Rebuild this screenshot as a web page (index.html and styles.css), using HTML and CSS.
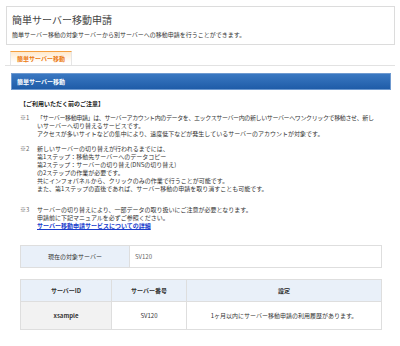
FILE: index.html
```html
<!DOCTYPE html>
<html lang="ja">
<head>
    <meta charset="UTF-8">
    <title>簡単サーバー移動申請</title>
    <link rel="stylesheet" href="styles.css">
</head>
<body>
    <div class="page-head">
        <h1>簡単サーバー移動申請</h1>
        <p class="lead">簡単サーバー移動の対象サーバーから別サーバーへの移動申請を行うことができます。</p>
    </div>

    <div class="tabs">
        <span class="tab">簡単サーバー移動</span>
    </div>

    <div class="section-bar">簡単サーバー移動</div>

    <div class="notes">
        <h2 class="notes-title">【ご利用いただく前のご注意】</h2>

        <div class="note">
            <span class="note-mark">※1</span>
            <p><span class="tight">「サーバー移動申請」は、サーバーアカウント内のデータを、エックスサーバー内の新しいサーバーへワンクリックで移動させ、新し</span><br>
            いサーバーへ切り替えるサービスです。<br>
            アクセスが多いサイトなどの集中により、速度低下などが発生しているサーバーのアカウントが対象です。</p>
        </div>

        <div class="note note-long">
            <span class="note-mark">※2</span>
            <p>新しいサーバーの切り替えが行われるまでには、<br>
            第1ステップ：移動先サーバーへのデータコピー<br>
            第2ステップ：サーバーの切り替え(DNSの切り替え)<br>
            の2ステップの作業が必要です。<br>
            共にインフォパネルから、クリックのみの作業で行うことが可能です。<br>
            また、第1ステップの直後であれば、サーバー移動の申請を取り消すことも可能です。</p>
        </div>

        <div class="note">
            <span class="note-mark">※3</span>
            <p>サーバーの切り替えにより、一部データの取り扱いにご注意が必要となります。<br>
            申請前に下記マニュアルを必ずご参照ください。<br>
            <a href="#" class="more-link">サーバー移動申請サービスについての詳細</a></p>
        </div>
    </div>

    <table class="info-table current">
        <tr>
            <th>現在の対象サーバー</th>
            <td>SV120</td>
        </tr>
    </table>

    <table class="info-table servers">
        <tr>
            <th class="col-id">サーバーID</th>
            <th class="col-no">サーバー番号</th>
            <th>設定</th>
        </tr>
        <tr>
            <td class="server-id">xsample</td>
            <td>SV120</td>
            <td>1ヶ月以内にサーバー移動申請の利用履歴があります。</td>
        </tr>
    </table>
</body>
</html>
```

FILE: styles.css
```css
body {
    margin: 0;
    font-family: "Noto Sans CJK JP", "Noto Sans", sans-serif;
    font-size: 6px;
    color: #333;
    background: #fff;
}

.page-head {
    margin: 6px 5px 0 6px;
    height: 37px;
    border: 1px solid #dcdcdc;
    padding: 0 5px;
    box-sizing: content-box;
}

.page-head h1 {
    margin: 6px 0 0;
    font-size: 10px;
    font-weight: normal;
    line-height: 14px;
    color: #444;
}

.lead {
    margin: 4px 0 0;
    line-height: 8px;
}

.tabs {
    margin: 6px 5px 0 5px;
    padding-left: 5px;
    border-bottom: 1px solid #e2e2e2;
    height: 14px;
}

.tab {
    display: inline-block;
    height: 13px;
    padding: 0 6px;
    border: 1px solid #e6e6e6;
    border-top: 1px solid #f5a040;
    border-bottom: none;
    background: linear-gradient(#ffe9cc, #fff 80%);
    color: #ec7a12;
    font-weight: bold;
    line-height: 13px;
}

.section-bar {
    margin: 7px 9px 0 11px;
    height: 15px;
    padding-left: 5px;
    border: 1px solid #6f9ad0;
    background: linear-gradient(#3a78c2, #1f5ca8);
    color: #fff;
    font-weight: bold;
    line-height: 15px;
}

.notes {
    padding: 0 14px 0 20px;
}

.notes-title {
    margin: 10px 0 6px;
    font-size: 6px;
    font-weight: bold;
    line-height: 8px;
    color: #222;
}

.note {
    display: grid;
    grid-template-columns: 17px 1fr;
    margin-bottom: 7px;
}

.note-long {
    margin-bottom: 13px;
}

.note-mark {
    color: #666;
    line-height: 8px;
}

.note p {
    margin: 0;
    line-height: 8px;
    white-space: nowrap;
}

.tight {
    letter-spacing: -0.38px;
}

.more-link {
    color: #1a3ccc;
    font-weight: bold;
    text-decoration: underline;
}

.info-table {
    width: 362px;
    margin: 0 18px 0 20px;
    border-collapse: collapse;
}

.info-table th,
.info-table td {
    border: 1px solid #dedede;
    height: 21px;
    padding: 0;
}

.info-table th {
    background: #e9f0f9;
    text-align: center;
}

.current {
    margin-top: 15px;
}

.current th {
    width: 108px;
    font-weight: normal;
}

.current td {
    padding-left: 5px;
    color: #666;
}

.servers {
    margin-top: 11px;
}

.servers th {
    font-weight: bold;
}

.servers .col-id {
    width: 90px;
}

.servers .col-no {
    width: 74px;
}

.servers td {
    height: 27px;
    text-align: center;
}

.servers .server-id {
    background: #f2f2f2;
    font-weight: bold;
}
```
